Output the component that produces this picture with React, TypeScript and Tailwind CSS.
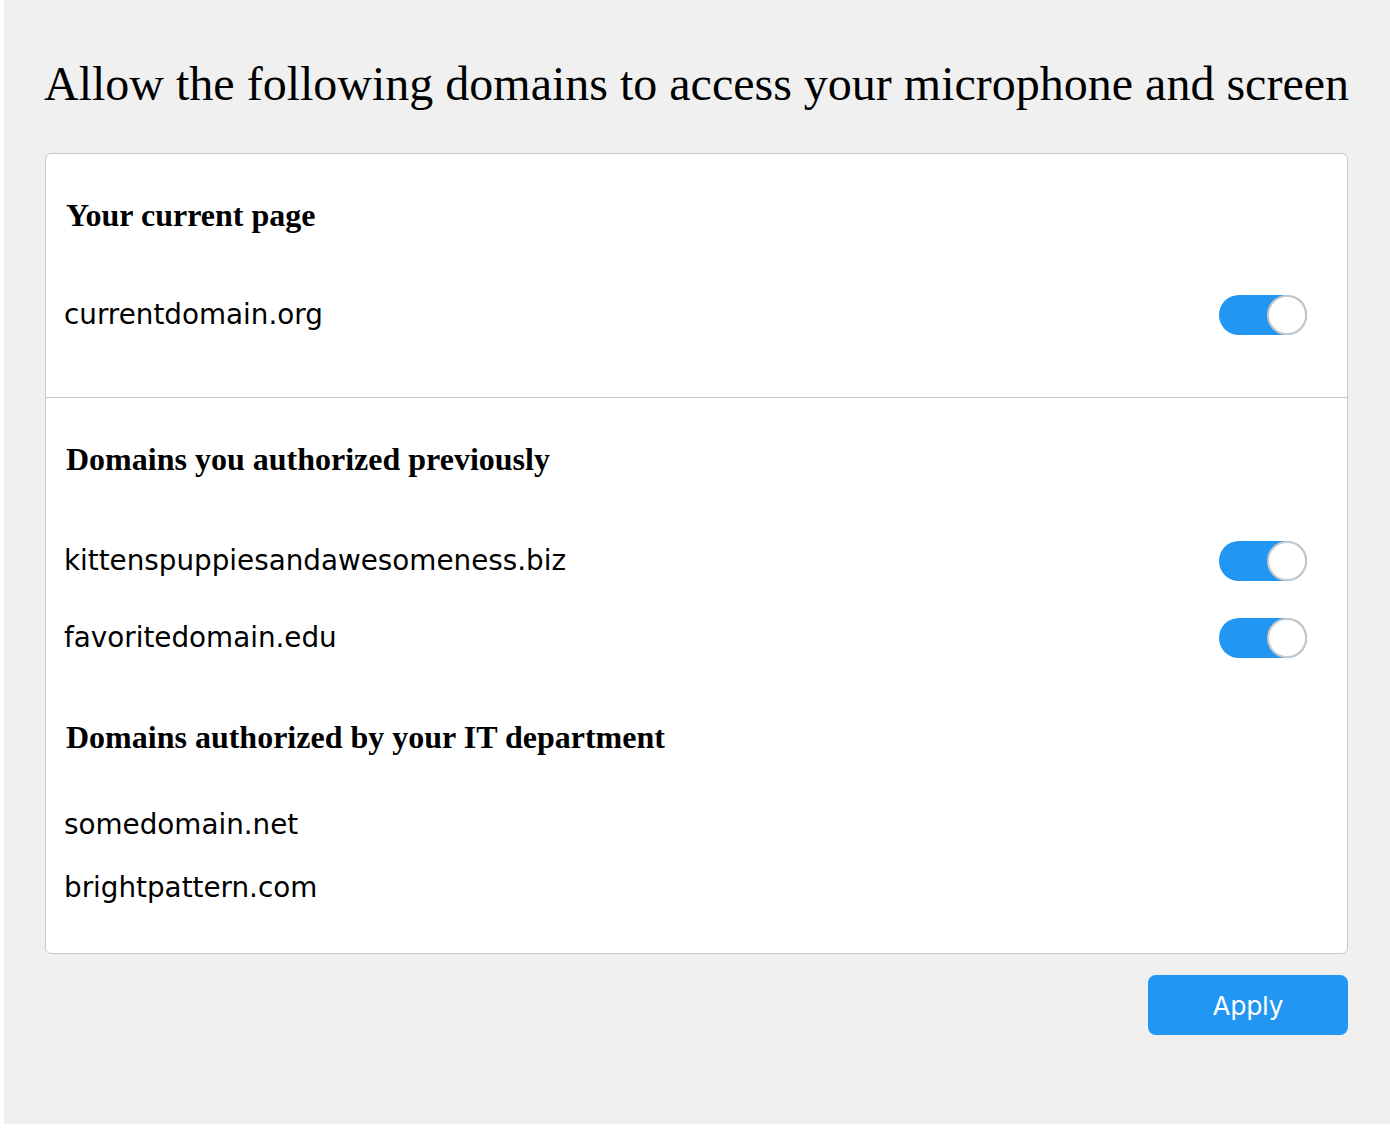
import React from "react";

const serif = { fontFamily: '"Liberation Serif", "Times New Roman", serif' };

function Toggle() {
  return (
    <div className="relative w-[88px] h-[40px] rounded-full bg-[#2196f3] shrink-0">
      <div className="absolute right-0 top-0 w-[40px] h-[40px] rounded-full bg-white border-2 border-[#c9c9c9]" />
    </div>
  );
}

function Row({ name, toggle }: { name: string; toggle?: boolean }) {
  return (
    <div className="flex items-center justify-between h-[40px] pr-[40px]">
      <span className="text-[27.8px] leading-[40px] text-black font-['DejaVu_Sans',sans-serif]">{name}</span>
      {toggle && <Toggle />}
    </div>
  );
}

function Heading({ children }: { children: React.ReactNode }) {
  return (
    <h2 className="text-[32px] leading-[32px] font-bold text-black pl-[2px]" style={serif}>
      {children}
    </h2>
  );
}

export default function App() {
  return (
    <div className="bg-white pl-[4px] pb-[4px]">
      <div className="bg-[#f0f0f0] h-[1124px] pl-[40px] pr-[42px] pt-[60px]">
        <h1 className="text-[48px] leading-[48px] text-black whitespace-nowrap" style={serif}>
          Allow the following domains to access your microphone and screen
        </h1>
        <div className="mt-[45px] bg-white border border-[#c8c8c8] rounded-[6px] w-[1303px] ml-[1px]">
          <div className="pl-[18px] pt-[45px] pb-[62px] border-b border-[#c8c8c8]">
            <Heading>Your current page</Heading>
            <div className="mt-[64px]">
              <Row name="currentdomain.org" toggle />
            </div>
          </div>
          <div className="pl-[18px] pt-[45px] pb-[45px]">
            <Heading>Domains you authorized previously</Heading>
            <div className="mt-[66px] flex flex-col gap-[37px]">
              <Row name="kittenspuppiesandawesomeness.biz" toggle />
              <Row name="favoritedomain.edu" toggle />
            </div>
            <div className="mt-[63px]">
              <Heading>Domains authorized by your IT department</Heading>
            </div>
            <div className="mt-[52px] flex flex-col gap-[23px]">
              <Row name="somedomain.net" />
              <Row name="brightpattern.com" />
            </div>
          </div>
        </div>
        <div className="flex justify-end mt-[21px] w-[1304px]">
          <button className="w-[200px] h-[60px] rounded-[8px] bg-[#2196f3] text-white text-[26px] font-['Inter',sans-serif]">
            Apply
          </button>
        </div>
      </div>
    </div>
  );
}
